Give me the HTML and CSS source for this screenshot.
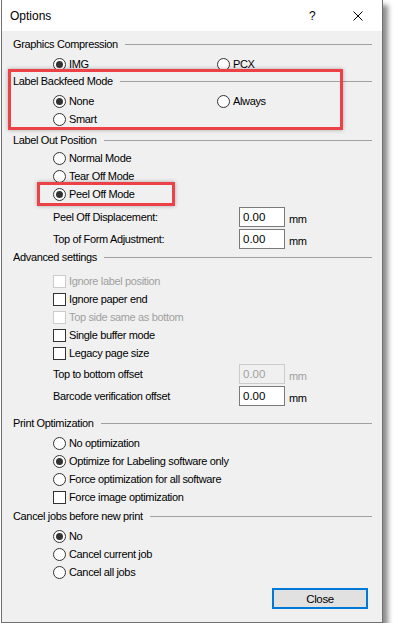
FILE: index.html
```html
<!DOCTYPE html>
<html>
<head>
    <link rel="stylesheet" href="styles.css">
</head>
<body>
    <div class="window">
        <div class="titlebar">
            <span class="title">Options</span>
            <span class="help">?</span>
            <span class="close-x">
                <svg width="10" height="10" viewBox="0 0 10 10"><path d="M0.5 0.5 L9.5 9.5 M9.5 0.5 L0.5 9.5" stroke="#000" stroke-width="1" fill="none"/></svg>
            </span>
        </div>

        <div class="content">
            <div class="group g-compress">
                <div class="group-title"><span>Graphics Compression</span></div>
                <div class="opts two-col">
                    <div class="opt"><span class="radio checked"></span>IMG</div>
                    <div class="opt"><span class="radio"></span>PCX</div>
                </div>
            </div>

            <div class="group g-backfeed">
                <div class="group-title"><span>Label Backfeed Mode</span></div>
                <div class="opts two-col">
                    <div class="opt"><span class="radio checked"></span>None</div>
                    <div class="opt"><span class="radio"></span>Always</div>
                    <div class="opt"><span class="radio"></span>Smart</div>
                </div>
            </div>

            <div class="group g-out">
                <div class="group-title"><span>Label Out Position</span></div>
                <div class="opts">
                    <div class="opt"><span class="radio"></span>Normal Mode</div>
                    <div class="opt"><span class="radio"></span>Tear Off Mode</div>
                    <div class="opt"><span class="radio checked"></span>Peel Off Mode</div>
                </div>
                <div class="fields">
                    <div class="field"><span class="field-label">Peel Off Displacement:</span><span class="num">0.00</span><span class="unit">mm</span></div>
                    <div class="field"><span class="field-label">Top of Form Adjustment:</span><span class="num">0.00</span><span class="unit">mm</span></div>
                </div>
            </div>

            <div class="group g-adv">
                <div class="group-title"><span>Advanced settings</span></div>
                <div class="opts">
                    <div class="opt disabled"><span class="check"></span>Ignore label position</div>
                    <div class="opt"><span class="check"></span>Ignore paper end</div>
                    <div class="opt disabled"><span class="check"></span>Top side same as bottom</div>
                    <div class="opt"><span class="check"></span>Single buffer mode</div>
                    <div class="opt"><span class="check"></span>Legacy page size</div>
                </div>
                <div class="fields">
                    <div class="field disabled"><span class="field-label">Top to bottom offset</span><span class="num">0.00</span><span class="unit">mm</span></div>
                    <div class="field"><span class="field-label">Barcode verification offset</span><span class="num">0.00</span><span class="unit">mm</span></div>
                </div>
            </div>

            <div class="group g-print">
                <div class="group-title"><span>Print Optimization</span></div>
                <div class="opts">
                    <div class="opt"><span class="radio"></span>No optimization</div>
                    <div class="opt"><span class="radio checked"></span>Optimize for Labeling software only</div>
                    <div class="opt"><span class="radio"></span>Force optimization for all software</div>
                    <div class="opt"><span class="check"></span>Force image optimization</div>
                </div>
            </div>

            <div class="group g-cancel">
                <div class="group-title"><span>Cancel jobs before new print</span></div>
                <div class="opts">
                    <div class="opt"><span class="radio checked"></span>No</div>
                    <div class="opt"><span class="radio"></span>Cancel current job</div>
                    <div class="opt"><span class="radio"></span>Cancel all jobs</div>
                </div>
            </div>

            <div class="buttons">
                <button class="btn">Close</button>
            </div>
        </div>

        <!-- red annotation boxes -->
        <div class="mark mark-backfeed"></div>
        <div class="mark mark-peel"></div>
    </div>
</body>
</html>
```

FILE: styles.css
```css
* {
    margin: 0;
    padding: 0;
    box-sizing: border-box;
}

body {
    background: #fff;
    font-family: 'Liberation Sans', Arial, sans-serif;
    font-size: 11px;
    letter-spacing: -0.35px;
    color: #000;
}

.window {
    position: relative;
    margin-left: 1px;
    width: 382px;
    height: 623px;
    border: 1px solid #707070;
    border-top: none;
    background: #f0f0f0;
    box-shadow: 5px 5px 5px rgba(0, 0, 0, 0.45);
    display: flex;
    flex-direction: column;
}

.titlebar {
    height: 31px;
    background: #fff;
    display: flex;
    align-items: center;
    padding-left: 8px;
    font-size: 12px;
    letter-spacing: 0;
}

.title {
    flex: 1;
}

.help {
    width: 12px;
    margin-right: 32px;
}

.close-x {
    display: flex;
    margin-right: 19px;
}

.content {
    padding: 0 10px 0 11px;
}

.group-title {
    height: 16px;
    display: flex;
    align-items: center;
}

.group-title::after {
    content: '';
    flex: 1;
    height: 1px;
    background: #a0a0a0;
    margin-left: 7px;
}

.opts {
    padding-left: 40px;
}

.two-col {
    display: grid;
    grid-template-columns: 164px 1fr;
}

.opt {
    height: 18px;
    display: flex;
    align-items: center;
    white-space: nowrap;
}

.opt.disabled {
    color: #a0a0a0;
}

.radio {
    width: 13px;
    height: 13px;
    border: 1px solid #333;
    border-radius: 50%;
    background: #fff;
    margin-right: 3px;
    display: flex;
    align-items: center;
    justify-content: center;
    flex-shrink: 0;
}

.radio.checked::after {
    content: '';
    width: 7px;
    height: 7px;
    border-radius: 50%;
    background: #333;
}

.check {
    width: 13px;
    height: 13px;
    border: 1px solid #333;
    background: #fff;
    margin-right: 3px;
    flex-shrink: 0;
}

.disabled .check {
    border-color: #ccc;
}

.fields {
    padding-left: 40px;
}

.field {
    height: 22px;
    display: flex;
    align-items: center;
}

.field-label {
    width: 186px;
}

.num {
    width: 46px;
    height: 20px;
    border: 1px solid #7a7a7a;
    background: #fff;
    padding-left: 3px;
    line-height: 18px;
    font-size: 11.5px;
    letter-spacing: 0;
}

.unit {
    margin-left: 4px;
    padding-top: 4px;
}

.field.disabled .num {
    border-color: #ccc;
    background: #f0f0f0;
    color: #a0a0a0;
}

.field.disabled .unit {
    color: #a0a0a0;
}

/* vertical rhythm per group */
.g-compress { margin-top: 5px; }
.g-compress .opts { padding-top: 3px; }
.g-backfeed .opts { padding-top: 3px; }
.g-out { margin-top: 4px; }
.g-out .opts { padding-top: 1px; }
.g-out .fields { padding-top: 3px; }
.g-adv { margin-top: -1px; }
.g-adv .opts { padding-top: 7px; }
.g-adv .fields { padding-top: 1px; }
.g-print { margin-top: 8px; }
.g-print .opts { padding-top: 3px; }
.g-cancel { margin-top: 2px; }
.g-cancel .opts { padding-top: 3px; }

.buttons {
    display: flex;
    justify-content: flex-end;
    margin-top: 7px;
    padding-right: 4px;
}

.btn {
    width: 96px;
    height: 21px;
    border: 2px solid #0078d7;
    background: #e1e1e1;
    font-family: inherit;
    font-size: 11.5px;
    letter-spacing: inherit;
    color: #000;
}

.mark {
    position: absolute;
    border: 3px solid #ec4146;
    box-shadow: 0 0 4px rgba(0, 0, 0, 0.3);
}

.mark-backfeed {
    left: 6px;
    top: 69px;
    width: 335px;
    height: 61px;
}

.mark-peel {
    left: 35px;
    top: 182px;
    width: 138px;
    height: 24px;
}
```
